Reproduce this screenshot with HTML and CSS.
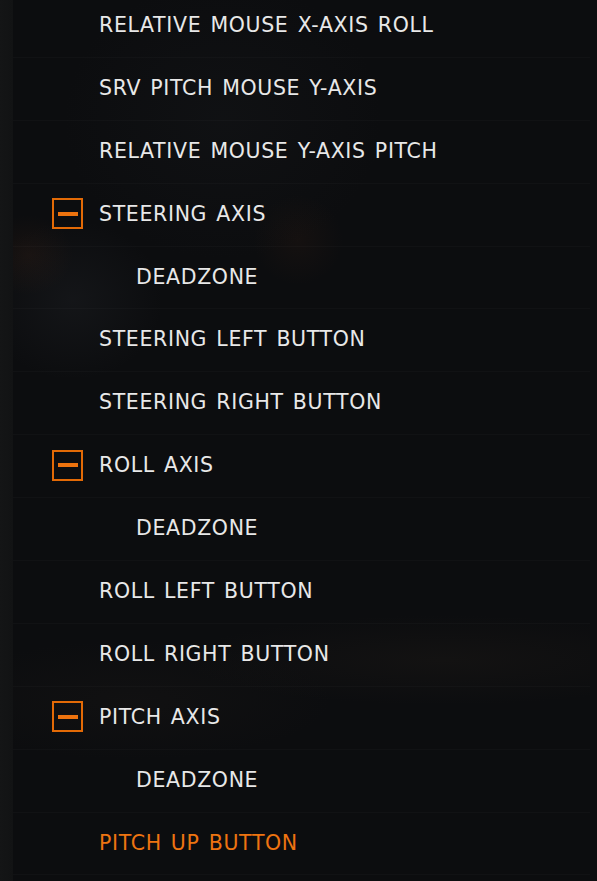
FILE: index.html
```html
<!DOCTYPE html>
<html lang="en">
<head>
<meta charset="utf-8">
<title>Controls</title>
<link rel="stylesheet" href="styles.css">
</head>
<body>
<div class="screen">
  <div class="panel">
    <ul class="list">
      <li class="row"><span class="label">RELATIVE MOUSE X-AXIS ROLL</span></li>
      <li class="row"><span class="label">SRV PITCH MOUSE Y-AXIS</span></li>
      <li class="row"><span class="label">RELATIVE MOUSE Y-AXIS PITCH</span></li>
      <li class="row"><span class="toggle"><span class="dash"></span></span><span class="label">STEERING AXIS</span></li>
      <li class="row sub"><span class="label">DEADZONE</span></li>
      <li class="row"><span class="label">STEERING LEFT BUTTON</span></li>
      <li class="row"><span class="label">STEERING RIGHT BUTTON</span></li>
      <li class="row"><span class="toggle"><span class="dash"></span></span><span class="label">ROLL AXIS</span></li>
      <li class="row sub"><span class="label">DEADZONE</span></li>
      <li class="row"><span class="label">ROLL LEFT BUTTON</span></li>
      <li class="row"><span class="label">ROLL RIGHT BUTTON</span></li>
      <li class="row"><span class="toggle"><span class="dash"></span></span><span class="label">PITCH AXIS</span></li>
      <li class="row sub"><span class="label">DEADZONE</span></li>
      <li class="row active"><span class="label">PITCH UP BUTTON</span></li>
    </ul>
  </div>
</div>
</body>
</html>
```

FILE: styles.css
```css
html, body {
  margin: 0;
  padding: 0;
  background: #121314;
  overflow: hidden;
}

.screen {
  width: 597px;
  height: 881px;
  display: flex;
  padding: 0 7px 0 13px;
  box-sizing: border-box;
  background: linear-gradient(90deg, #141516 0, #121314 13px, #0d0e10 13px);
}

.panel {
  flex: 1;
  overflow: hidden;
  background:
    radial-gradient(ellipse 45px 40px at 15px 255px, rgba(110, 55, 25, 0.12), transparent),
    radial-gradient(ellipse 90px 80px at 60px 300px, rgba(90, 95, 105, 0.10), transparent),
    radial-gradient(ellipse 45px 45px at 285px 240px, rgba(100, 50, 25, 0.10), transparent),
    radial-gradient(ellipse 260px 45px at 430px 660px, rgba(70, 55, 40, 0.12), transparent),
    radial-gradient(ellipse 200px 60px at 120px 700px, rgba(60, 48, 38, 0.10), transparent),
    radial-gradient(ellipse 160px 140px at 210px 120px, rgba(40, 42, 46, 0.14), transparent),
    #0c0d0f;
}

.list {
  list-style: none;
  margin: -5px 0 0 0;
  padding: 0;
}

.row {
  height: 62.9px;
  box-sizing: border-box;
  display: flex;
  align-items: center;
  padding: 0 0 2px 39px;
  border-bottom: 1px solid rgba(255, 255, 255, 0.022);
  font-family: "DejaVu Sans", "Liberation Sans", sans-serif;
  font-size: 20.5px;
  letter-spacing: 0.65px;
  word-spacing: 2px;
  color: #e8e8e8;
}

.label {
  margin-left: 47px;
  white-space: nowrap;
}

.toggle + .label {
  margin-left: 16px;
}

.sub .label {
  margin-left: 84px;
}

.active .label {
  color: #ee7411;
}

.toggle {
  width: 31px;
  height: 31px;
  box-sizing: border-box;
  border: 2px solid #e36a06;
  display: flex;
  align-items: center;
  justify-content: center;
}

.dash {
  width: 20px;
  height: 4px;
  background: #ee730e;
}
```
